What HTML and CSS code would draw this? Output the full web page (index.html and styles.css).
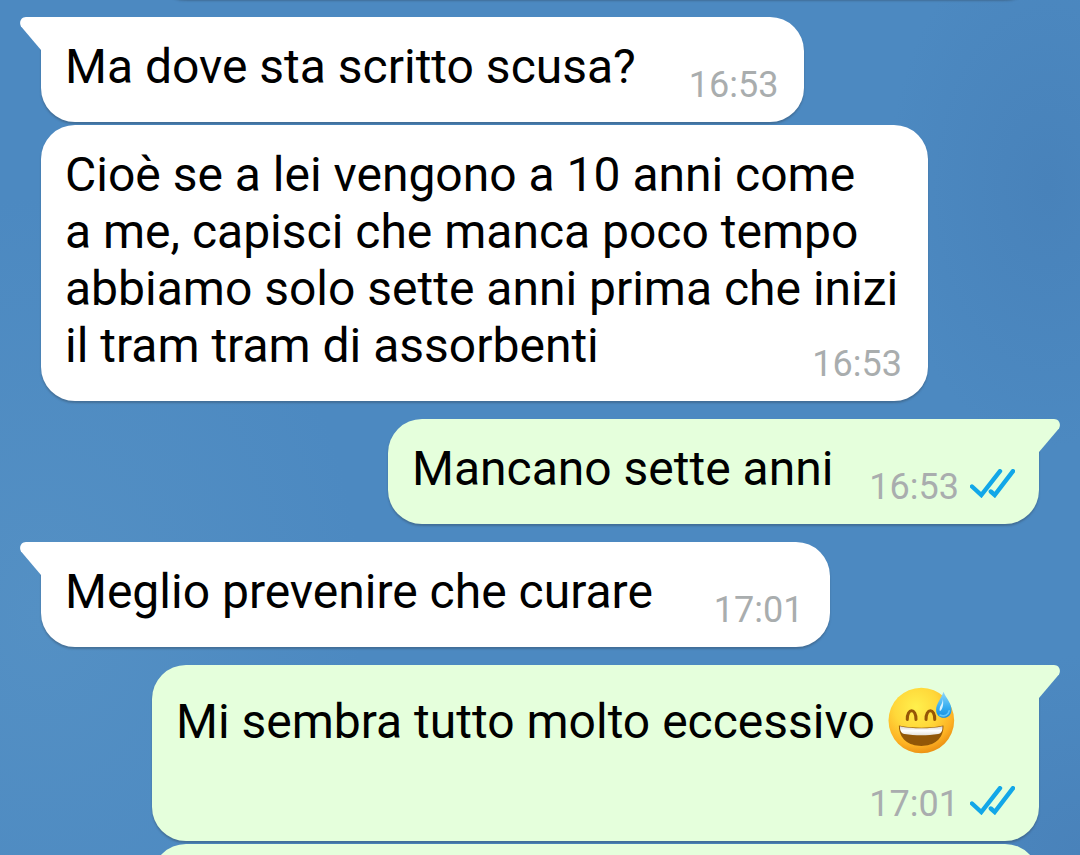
FILE: index.html
```html
<!DOCTYPE html>
<html lang="it">
<head>
<meta charset="utf-8">
<meta name="viewport" content="width=device-width, initial-scale=1">
<title>Chat</title>
<link rel="stylesheet" href="styles.css">
</head>
<body>
<svg class="defs" aria-hidden="true">
  <symbol id="ticks" viewBox="0 0 45 29">
    <path d="M2 17.5 L11.3 26 L30 2.2 M20.8 22.5 L24.7 26 L43 2.2" fill="none" stroke="#12a7e8" stroke-width="4.4" stroke-linecap="round"/>
  </symbol>
  <symbol id="tail" viewBox="0 0 22 34">
    <path d="M22 0 H6 C0.5 0 -1.5 6 1.5 10 L21 33 H22 Z"/>
  </symbol>
</svg>
<main class="chat">
  <div class="bubble out previous"></div>

  <article class="bubble in first">
    <svg class="tail" aria-hidden="true"><use href="#tail"/></svg>
    <p class="text">Ma dove sta scritto scusa?</p>
    <div class="meta"><time>16:53</time></div>
  </article>

  <article class="bubble in wide">
    <p class="text">Cioè se a lei vengono a 10 anni come<br>a me, capisci che manca poco tempo<br>abbiamo solo sette anni prima che inizi<br>il tram tram di assorbenti</p>
    <div class="meta"><time>16:53</time></div>
  </article>

  <article class="bubble out first">
    <svg class="tail" aria-hidden="true"><use href="#tail"/></svg>
    <p class="text">Mancano sette anni</p>
    <div class="meta"><time>16:53</time><svg class="ticks" role="img" aria-label="Letto"><use href="#ticks"/></svg></div>
  </article>

  <article class="bubble in first roomy">
    <svg class="tail" aria-hidden="true"><use href="#tail"/></svg>
    <p class="text">Meglio prevenire che curare</p>
    <div class="meta"><time>17:01</time></div>
  </article>

  <article class="bubble out first wide stacked">
    <svg class="tail" aria-hidden="true"><use href="#tail"/></svg>
    <p class="text">Mi sembra tutto molto eccessivo
      <svg class="emoji" viewBox="54 55 202 200" role="img" aria-label="Faccina che ride con goccia di sudore">
        <defs>
          <radialGradient id="face" cx="0.42" cy="0.3" r="0.74">
            <stop offset="0" stop-color="#fff04d"/>
            <stop offset="0.45" stop-color="#ffd83a"/>
            <stop offset="0.78" stop-color="#fdb224"/>
            <stop offset="1" stop-color="#e8890f"/>
          </radialGradient>
          <linearGradient id="drop" x1="0" y1="0" x2="0" y2="1">
            <stop offset="0" stop-color="#8fd8fb"/>
            <stop offset="0.6" stop-color="#35adf0"/>
            <stop offset="1" stop-color="#168ede"/>
          </linearGradient>
          <linearGradient id="teeth" x1="0" y1="0" x2="0" y2="1">
            <stop offset="0" stop-color="#d9d5cd"/>
            <stop offset="0.5" stop-color="#ffffff"/>
            <stop offset="1" stop-color="#e6e2da"/>
          </linearGradient>
        </defs>
        <circle cx="156" cy="155" r="98" fill="url(#face)"/>
        <path d="M114 152 C113 117 141 117 140 152 M170 152 C169 117 197 117 196 152" fill="none" stroke="#955606" stroke-width="9" stroke-linecap="round"/>
        <path d="M89 170 C130 179 183 179 222 170 C223 210 193 231 156 231 C119 231 89 210 89 170 Z" fill="#925707"/>
        <path d="M92 172 C130 180 183 180 219 172 C220 186 216 193 206 195 C174 200 137 200 106 195 C96 193 92 186 92 172 Z" fill="url(#teeth)"/>
        <path d="M222 69 C228 86 246 102 246 123 C246 138 236 147 223 147 C210 147 200 138 200 123 C200 104 217 88 222 69 Z" fill="url(#drop)"/>
        <path d="M220 91 C220 107 208 113 211 127 C218 126 224 108 220 91 Z" fill="#d8f3ff"/>
        <path d="M212 139 C225 144 237 139 239 126" fill="none" stroke="#62c6f8" stroke-width="5" stroke-linecap="round"/>
      </svg></p>
    <div class="meta"><time>17:01</time><svg class="ticks" role="img" aria-label="Letto"><use href="#ticks"/></svg></div>
  </article>

  <div class="bubble out next"></div>
</main>
</body>
</html>
```
FILE: styles.css
```css
* {
  box-sizing: border-box;
}

body {
  margin: 0;
  font-family: Roboto, "Noto Sans", sans-serif;
  background:
    radial-gradient(ellipse 320px 420px at 4% 72%, #5490c4, transparent),
    radial-gradient(ellipse 160px 260px at 97% 22%, #4882ba, transparent),
    radial-gradient(ellipse 200px 200px at 100% 100%, #4982ba, transparent),
    #4c89c1;
}

.defs {
  position: absolute;
  width: 0;
  height: 0;
}

.chat {
  display: flex;
  flex-direction: column;
  gap: 3px;
  height: 100vh;
  padding: 0 41px;
  overflow: hidden;
}

.bubble {
  position: relative;
  display: flex;
  flex: none;
  align-items: flex-end;
  max-width: 887px;
  padding: 21px 24px 16px;
  border-radius: 34px;
  box-shadow: 0 2px 2px rgba(50, 70, 90, 0.4);
}

.in {
  align-self: flex-start;
  gap: 53px;
  background: #ffffff;
  fill: #ffffff;
}

.out {
  align-self: flex-end;
  gap: 36px;
  background: #e5ffdc;
  fill: #e5ffdc;
}

.first {
  margin-top: 15px;
}

.in.first {
  border-top-left-radius: 0;
}

.out.first {
  border-top-right-radius: 0;
}

.roomy {
  gap: 61px;
}

.tail {
  position: absolute;
  top: 0;
  right: calc(100% - 1px);
  width: 22px;
  height: 34px;
}

.out .tail {
  right: auto;
  left: calc(100% - 1px);
  transform: scaleX(-1);
}

.text {
  margin: 0 0 11px;
  font-size: 48px;
  line-height: 57px;
  color: #000000;
}

.meta {
  display: flex;
  align-items: flex-end;
  gap: 11px;
  font-size: 36px;
  line-height: 42px;
  color: #a9adae;
}

.in .meta {
  margin-right: 2px;
}

.ticks {
  width: 45px;
  height: 29px;
  margin-bottom: 10px;
}

.wide {
  display: grid;
  width: 100%;
}

.wide .text,
.wide .meta {
  grid-area: 1 / 1;
}

.wide .meta {
  justify-self: end;
}

.stacked {
  row-gap: 33px;
  padding-top: 28px;
}

.stacked .text {
  margin: 0;
}

.stacked .meta {
  grid-area: 2 / 1;
}

.emoji {
  width: 68px;
  height: 67px;
  margin: -6px 0;
  vertical-align: -10px;
}

.previous {
  width: 100%;
  height: 80px;
  margin-top: -81px;
}

.next {
  width: 100%;
  height: 105px;
}
```
